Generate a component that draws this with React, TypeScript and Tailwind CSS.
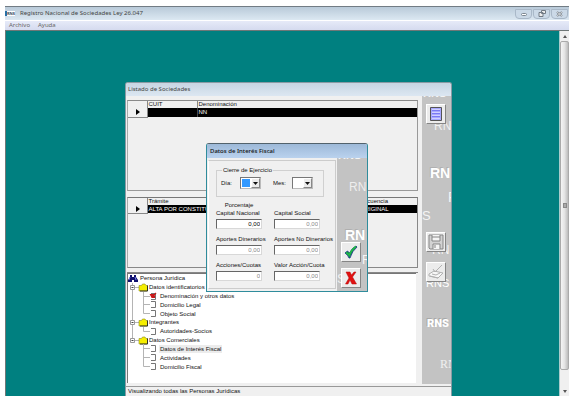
import React from "react";

const UI = "font-['Noto_Sans','Open_Sans',sans-serif]";

type Mark = { text: string; className: string };

function Watermarks({ marks }: { marks: Mark[] }) {
  return (
    <>
      {marks.map((m, i) => (
        <span
          key={i}
          aria-hidden="true"
          className={`pointer-events-none absolute whitespace-nowrap leading-none ${m.className}`}
        >
          {m.text}
        </span>
      ))}
    </>
  );
}

const listMarks: Mark[] = [
  { text: "RNS", className: "left-px -top-2 text-[11px] font-bold text-[#f4f4f4]" },
  { text: "RN", className: "left-3 top-6 text-[12px] text-[#f0f0f0]" },
  { text: "RN", className: "left-2 top-[70px] text-[14px] font-bold text-white [text-shadow:-1px_-1px_0_#b0b0b0]" },
  { text: "R", className: "left-[26px] top-[94px] text-[14px] text-[#f6f6f6]" },
  { text: "S", className: "left-0 top-[113px] text-[13px] text-[#f4f4f4]" },
  { text: "RN", className: "left-2.5 top-[148px] text-[12px] text-[#f4f4f4]" },
  { text: "RNS", className: "left-1 top-[182px] text-[11px] text-white" },
  {
    text: "RNS",
    className:
      "left-[5px] top-[222px] font-['Roboto',sans-serif] text-[11px] font-black text-white [text-shadow:-1px_-1px_0_#a8a8a8]",
  },
  { text: "RN", className: "left-[18px] top-[262px] font-['Liberation_Serif',serif] text-[12px] text-[#f0f0f0]" },
];

const dialogMarks: Mark[] = [
  { text: "RNS", className: "left-px -top-2 text-[11px] font-bold text-[#f4f4f4]" },
  { text: "RN", className: "left-3 top-[23px] text-[12px] text-[#eeeeee]" },
  { text: "RN", className: "left-2 top-[70px] text-[14px] font-bold text-white [text-shadow:-1px_-1px_0_#b0b0b0]" },
  { text: "R", className: "left-[25px] top-[96px] text-[12px] text-[#f6f6f6]" },
  { text: "S", className: "left-0 top-[114px] text-[13px] text-[#f0f0f0]" },
];

function ToolButton({ label, className = "", children }: { label: string; className?: string; children: React.ReactNode }) {
  return (
    <button
      type="button"
      aria-label={label}
      className={`relative z-10 flex size-5 shrink-0 items-center justify-center border border-t-white border-l-white border-r-[#858585] border-b-[#858585] bg-[#ececec] ${className}`}
    >
      {children}
    </button>
  );
}

function CaptionButton({ label, children }: { label: string; children: React.ReactNode }) {
  return (
    <button
      type="button"
      aria-label={label}
      className="flex h-2.5 w-[17px] items-center justify-center rounded-b-sm border border-[#a9b8c8] bg-[#cbd9e7]"
    >
      {children}
    </button>
  );
}

function Marker() {
  return (
    <svg viewBox="0 0 4 6" className="ml-2 h-1.5 w-1" aria-hidden="true">
      <path d="M0 0 4 3 0 6Z" fill="#000" />
    </svg>
  );
}

function CompaniesTable() {
  return (
    <div className="h-[91px] border border-t-[#8a8a8a] border-l-[#aaa] border-r-[#999] border-b-[#999]">
      <table className="w-full table-fixed border-collapse text-[6px] leading-[7px]">
        <colgroup>
          <col className="w-[19px]" />
          <col className="w-[50px]" />
          <col />
        </colgroup>
        <thead>
          <tr className="h-[7px]">
            <th className="p-0" aria-label="Selector" />
            <th className="border-l border-[#888] p-0 pl-px text-left font-normal">CUIT</th>
            <th className="border-l border-[#888] p-0 pl-px text-left font-normal">Denominación</th>
          </tr>
        </thead>
        <tbody>
          <tr className="h-[9px] bg-black text-white">
            <td className="border-r border-b border-[#888] bg-[#f0f0f0] p-0">
              <Marker />
            </td>
            <td className="p-0" />
            <td className="border-l border-[#444] p-0 pl-px">NN</td>
          </tr>
        </tbody>
      </table>
    </div>
  );
}

function ProceduresTable() {
  return (
    <div className="h-[71px] border border-t-[#777] border-l-[#aaa] border-r-[#888] border-b-[#888]">
      <table className="w-full table-fixed border-collapse text-[6px] leading-[7px]">
        <colgroup>
          <col className="w-[19px]" />
          <col />
          <col className="w-[57px]" />
        </colgroup>
        <thead>
          <tr className="h-[7px]">
            <th className="p-0" aria-label="Selector" />
            <th className="border-l border-[#888] p-0 pl-px text-left font-normal">Trámite</th>
            <th className="p-0 text-left font-normal">Secuencia</th>
          </tr>
        </thead>
        <tbody>
          <tr className="h-2 bg-black whitespace-nowrap text-white">
            <td className="border-r border-b border-[#888] bg-[#f0f0f0] p-0">
              <Marker />
            </td>
            <td className="p-0 pl-px">ALTA POR CONSTITUCIÓN</td>
            <td className="p-0">ORIGINAL</td>
          </tr>
        </tbody>
      </table>
    </div>
  );
}

type Node = { label: string; kind: "root" | "folder" | "leaf"; checked?: boolean; selected?: boolean; last?: boolean };

const nodes: Node[] = [
  { label: "Persona Jurídica", kind: "root" },
  { label: "Datos identificatorios", kind: "folder" },
  { label: "Denominación y otros datos", kind: "leaf", checked: true },
  { label: "Domicilio Legal", kind: "leaf" },
  { label: "Objeto Social", kind: "leaf", last: true },
  { label: "Integrantes", kind: "folder" },
  { label: "Autoridades-Socios", kind: "leaf", last: true },
  { label: "Datos Comerciales", kind: "folder" },
  { label: "Datos de Interés Fiscal", kind: "leaf", selected: true },
  { label: "Actividades", kind: "leaf" },
  { label: "Domicilio Fiscal", kind: "leaf", last: true },
];

function NodeIcon({ node, trunk }: { node: Node; trunk: boolean }) {
  if (node.kind === "root") {
    return (
      <svg viewBox="0 0 10 9" className="mr-px h-[9px] w-2.5 shrink-0" aria-hidden="true">
        <path d="M2 1h2v2h2V1h2v2l2 3v2H6V6H4v2H0V6l2-3Z" fill="#10106e" />
        <path d="M2 3 1 6M7 3l1 3" stroke="#6c7be0" />
      </svg>
    );
  }
  if (node.kind === "folder") {
    return (
      <svg viewBox="0 0 20 9" className="h-[9px] w-5 shrink-0" aria-hidden="true">
        <path d={trunk ? "M4.5 0v9M7 4.5h4" : "M4.5 0v4M7 4.5h4"} stroke="#b4b4b4" fill="none" />
        <path d="M2.5 2.5h4v4h-4Z" fill="#fff" stroke="#999" />
        <path d="M3.5 4.5h2" stroke="#444" />
        <path d="M11 2.5h2.5l1-1.5H17l1 1.5h1.500V8H11Z" fill="#f5ee00" stroke="#8c8a20" strokeWidth=".6" />
        <path d="M19.500 2.500V8H12" fill="none" stroke="#222" strokeWidth=".9" />
      </svg>
    );
  }
  return (
    <svg viewBox="0 0 31 9" className="h-[9px] w-[31px] shrink-0" aria-hidden="true">
      <path d={node.last ? "M15.500 0v4.500H22" : "M15.500 0v9M15.500 4.500H22"} stroke="#b4b4b4" fill="none" />
      {trunk && <path d="M4.500 0v9" stroke="#b4b4b4" />}
      <path d="M23 1.500h4.500v6H23" fill="#fff" stroke="#666" strokeWidth=".9" />
      {node.checked && <path d="M22.500 2.500h4v3h-2.500zM24 5.500 28 1" stroke="#c81818" strokeWidth="1.200" fill="#d01818" />}
    </svg>
  );
}

function Tree() {
  return (
    <ul className="flex h-[110px] flex-col border-t border-l border-[#777] bg-white pb-3 text-[6px] leading-[8px]">
      {nodes.map((node, i) => (
        <li key={node.label} className="flex min-h-0 flex-1 items-center whitespace-nowrap">
          <NodeIcon node={node} trunk={i < 7} />
          <span className={node.selected ? "bg-[#ececec] px-px" : "px-px"}>{node.label}</span>
        </li>
      ))}
    </ul>
  );
}

function ListWindow() {
  return (
    <section className="absolute top-[51px] bottom-0 left-[119px] flex w-[327px] flex-col overflow-hidden rounded-t-[3px] border border-b-0 border-[#8a9aa4] bg-[#f0f0f0]">
      <h2 className={`${UI} h-[13px] shrink-0 bg-linear-to-b from-[#c7d5e2] to-[#dce7f2] px-0.5 text-[6px] leading-[13px] text-[#444]`}>
        Listado de Sociedades
      </h2>
      <div className="flex min-h-0 flex-1">
        <div className="flex min-w-0 flex-1 flex-col pt-1 pr-1 pl-px">
          <CompaniesTable />
          <div className="h-1.5" />
          <ProceduresTable />
          <div className="mt-1 border-t border-[#888] pr-0.5">
            <Tree />
          </div>
        </div>
        <div className="relative mb-0.5 flex w-[29px] flex-col overflow-hidden bg-[#c3c3c3] pt-2 pl-1">
          <Watermarks marks={listMarks} />
          <ToolButton label="Listado">
            <svg viewBox="0 0 12 14" className="h-3.5 w-3" aria-hidden="true">
              <path d="M.5.5h11v13H.5Z" fill="#a8a8ff" stroke="#555" />
              <path d="M2 3.500h8M2 6.500h8M2 9.500h8" stroke="#7a7af4" />
              <path d="M2 2.500h8M2 5.500h8M2 8.500h8M2 11.500h8" stroke="#d0d0ff" />
            </svg>
          </ToolButton>
          <ToolButton label="Guardar" className="mt-[108px]">
            <svg viewBox="0 0 16 16" className="size-4" fill="none" stroke="#858585" aria-hidden="true">
              <path d="M1 1h14v14H2l-1-1Z" fill="#d2d2d2" />
              <path d="M4 1v6h8V1M4 3h8" fill="#f5f5f5" />
              <path d="M5 15v-5h7v5M7 11v3" fill="#f5f5f5" />
            </svg>
          </ToolButton>
          <ToolButton label="Firmar" className="mt-2.5">
            <svg viewBox="0 0 16 16" className="size-4" fill="none" stroke="#b0b0b0" aria-hidden="true">
              <path d="M1 10 6 7l9 2-5 5-9-2Z" fill="#f8f8f8" />
              <path d="M5 5 7 8l7-7M4 10l4 1 4-2M2 12l8 2 4-4" />
            </svg>
          </ToolButton>
        </div>
      </div>
      <footer className="h-[10px] shrink-0 border-t border-[#999] px-0.5 text-[6px] leading-[9px]">
        Visualizando todas las Personas Jurídicas
      </footer>
    </section>
  );
}

function Drop({ id, label, selected = false }: { id: string; label: string; selected?: boolean }) {
  return (
    <div className="flex items-center">
      <label htmlFor={id} className="w-[19px] text-[6px]">
        {label}
      </label>
      <span className="relative flex h-3 w-[21px] border border-t-[#777] border-l-[#777] border-r-[#bbb] border-b-[#bbb] bg-white">
        <select id={id} className={`min-w-0 flex-1 appearance-none ${selected ? "m-px bg-[#3399ff]" : "bg-white"}`}>
          <option value="" />
        </select>
        <span className="pointer-events-none flex w-[9px] items-center justify-center border border-t-white border-l-white border-r-[#888] border-b-[#888] bg-[#ececec]">
          <svg viewBox="0 0 5 3" className="h-[3px] w-[5px]" aria-hidden="true">
            <path d="M0 0h5L2.500 3Z" fill="#111" />
          </svg>
        </span>
      </span>
    </div>
  );
}

function Field({ id, label, value, active = false }: { id: string; label: string; value: string; active?: boolean }) {
  return (
    <div className="flex flex-col">
      <label htmlFor={id} className="mb-0.5 h-2 text-[6px] leading-[8px] whitespace-nowrap">
        {label}
      </label>
      <input
        id={id}
        defaultValue={value}
        className={`h-2.5 w-[46px] border border-t-[#666] border-l-[#666] border-r-[#d8d8d8] border-b-[#d8d8d8] bg-white px-px text-right text-[6px] leading-[8px] ${active ? "text-black" : "text-[#888]"}`}
      />
    </div>
  );
}

function FiscalDialog() {
  return (
    <section
      role="dialog"
      aria-labelledby="fiscal-title"
      className="absolute top-28 left-[200px] flex w-[162px] flex-col overflow-hidden rounded-t-[3px] border border-t-[#52626c] border-r-[#2f8c9c] border-b-[#2f8c9c] border-l-[#2f8c9c] bg-[#f0f0f0]"
    >
      <h2
        id="fiscal-title"
        className={`${UI} h-[14px] bg-linear-to-b from-[#9db9d8] to-[#bad2ee] px-[3px] text-[6px] leading-[14px] font-medium text-[#111]`}
      >
        Datos de Interés Fiscal
      </h2>
      <div className="flex h-[133px]">
        <form className="mt-0.5 mr-px mb-0.5 ml-px min-w-0 flex-1 border border-t-[#ccc] border-r-[#ccc] border-b-[#ccc] border-l-white pl-[7px]">
          <fieldset className="mt-[5px] mr-[11px] h-[31px] border border-[#d0d0d0] pb-1 pl-1">
            <legend className="ml-px px-px text-[6px] leading-[8px]">Cierre de Ejercicio</legend>
            <div className="flex h-full items-center gap-3">
              <Drop id="dia" label="Día:" selected />
              <Drop id="mes" label="Mes:" />
            </div>
          </fieldset>
          <p className="mt-1 w-[46px] text-center text-[6px] leading-[8px]">Porcentaje</p>
          <div className="grid grid-cols-[58px_58px] gap-y-1.5">
            <Field id="capital-nacional" label="Capital Nacional" value="0,00" active />
            <Field id="capital-social" label="Capital Social" value="0,00" />
            <Field id="dinerarios" label="Aportes Dinerarios" value="0,00" />
            <Field id="no-dinerarios" label="Aportes No Dinerarios" value="0,00" />
            <Field id="acciones" label="Acciones/Cuotas" value="0" />
            <Field id="valor" label="Valor Acción/Cuota" value="0,00" />
          </div>
        </form>
        <div className="relative flex w-[30px] flex-col justify-end gap-1.5 overflow-hidden bg-[#c3c3c3] pb-[3px] pl-1">
          <Watermarks marks={dialogMarks} />
          <ToolButton label="Aceptar">
            <svg viewBox="0 0 14 14" className="size-3.5" aria-hidden="true">
              <path d="M1 8 3.500 6 5.500 8Q8 3 12 1l1 1Q8 6 6 13H5Q4 10 1 8Z" fill="#119b45" stroke="#1c2c8c" strokeWidth=".8" />
              <path d="M2 7.500 5 10Q8 4 12 1.500" stroke="#22b84a" strokeWidth="1.500" fill="none" />
            </svg>
          </ToolButton>
          <ToolButton label="Cancelar">
            <svg viewBox="0 0 14 14" className="size-3.5" aria-hidden="true">
              <path d="M2 1h4l1.500 3L10 1h2L8.500 6 12.500 13H8L6 9 4 13H1.500L5 7Z" fill="#e01010" stroke="#b80808" strokeWidth=".5" />
            </svg>
          </ToolButton>
        </div>
      </div>
    </section>
  );
}

function ScrollBar() {
  return (
    <div className="flex w-2.5 shrink-0 flex-col border-l border-[#a9cccc] bg-[#f0f0f0]">
      <button type="button" aria-label="Subir" className="flex h-2.5 items-center justify-center">
        <svg viewBox="0 0 4 3" className="h-[3px] w-1" aria-hidden="true">
          <path d="M0 3 2 0l2 3Z" fill="#555" />
        </svg>
      </button>
      <div className="flex flex-1 items-center justify-center rounded-xs border border-[#aaa] bg-linear-to-r from-[#f5f5f5] via-[#e4e4e4] to-[#bcbcbc]">
        <span className="h-[5px] w-1 border border-[#888] bg-[#aaa]" />
      </div>
      <div className="h-4" />
      <button type="button" aria-label="Bajar" className="flex h-2.5 items-center justify-center">
        <svg viewBox="0 0 4 3" className="h-[3px] w-1" aria-hidden="true">
          <path d="M0 0h4L2 3Z" fill="#555" />
        </svg>
      </button>
    </div>
  );
}

export default function App() {
  return (
    <main className="flex min-h-screen flex-col bg-white pt-1.5 pr-1.5 pb-4 pl-[5px] font-['Liberation_Sans',Arial,sans-serif] text-[#111]">
      <header className={`${UI} border-t border-[#727c84] text-[6px]`}>
        <div className="flex h-[13px] items-center bg-linear-to-b from-[#b9cad9] to-[#dce8f2] pr-px">
          <span className="flex h-[5px] w-2.5 items-center bg-white text-[4px] leading-none font-bold text-[#345]" aria-hidden="true">
            <span className="h-[5px] w-0.5 bg-[#2871a8]" />
            RNS
          </span>
          <h1 className="flex-1 pl-[5px] leading-[13px] text-[#444]">Registro Nacional de Sociedades Ley 26.047</h1>
          <div className="flex gap-px">
            <CaptionButton label="Minimizar">
              <span className="mt-0.5 h-[3px] w-1.5 rounded-xs border border-[#7d8791] bg-white" />
            </CaptionButton>
            <CaptionButton label="Restaurar">
              <svg viewBox="0 0 8 7" className="h-[7px] w-2" fill="#eee" stroke="#717a84" aria-hidden="true">
                <path d="M3.500.5h4v3h-4Z M1 2.500h4v4H1Z" />
              </svg>
            </CaptionButton>
            <CaptionButton label="Cerrar">
              <svg viewBox="0 0 7 6" className="h-1.5 w-[7px]" aria-hidden="true">
                <path d="m1 1 5 4M6 1 1 5" stroke="#727b84" strokeWidth="2" />
                <path d="m1 1 5 4M6 1 1 5" stroke="#fff" strokeWidth=".7" />
              </svg>
            </CaptionButton>
          </div>
        </div>
        <nav className="flex h-2.5 items-center gap-2 border-t border-white bg-linear-to-b from-[#e6eaf8] to-[#d5dbef] pl-1 text-[#666]">
          <button type="button" className="leading-[9px]">Archivo</button>
          <button type="button" className="leading-[9px]">Ayuda</button>
        </nav>
      </header>
      <div className="flex min-h-[366px] flex-1 border-t border-l border-[#6f7777]">
        <div className="relative min-w-0 flex-1 overflow-hidden bg-[#008080]">
          <ListWindow />
          <FiscalDialog />
        </div>
        <ScrollBar />
      </div>
    </main>
  );
}
